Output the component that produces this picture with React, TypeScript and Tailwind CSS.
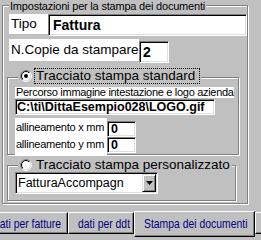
import React from 'react';

const sunken =
  'border border-t-[#808080] border-l-[#808080] border-b-white border-r-white shadow-[inset_1px_1px_0_#000,inset_-1px_-1px_0_#dfdfdf] bg-white';
const etched = 'border border-[#808080] shadow-[1px_1px_0_#fff,inset_1px_1px_0_#fff]';

const Radio: React.FC<{ checked?: boolean }> = ({ checked }) => (
  <svg width="12" height="12" viewBox="0 0 12 12" className="shrink-0">
    <defs>
      <linearGradient id="ro" x1="0" y1="0" x2="1" y2="1">
        <stop offset="0.5" stopColor="#808080" />
        <stop offset="0.5" stopColor="#ffffff" />
      </linearGradient>
      <linearGradient id="ri" x1="0" y1="0" x2="1" y2="1">
        <stop offset="0.5" stopColor="#000000" />
        <stop offset="0.5" stopColor="#dfdfdf" />
      </linearGradient>
    </defs>
    <circle cx="6" cy="6" r="5.5" fill="none" stroke="url(#ro)" />
    <circle cx="6" cy="6" r="4.5" fill="#fff" stroke="url(#ri)" />
    {checked && <circle cx="6" cy="6" r="2" fill="#000" />}
  </svg>
);

const Tab: React.FC<{ label: string; w: string; selected?: boolean }> = ({ label, w, selected }) => (
  <div
    className={`${w} ${selected ? 'h-[26px] -mt-[1px] pt-[5px]' : 'h-[22px] pt-[4px]'} relative shrink-0 border-t border-l border-t-white border-l-white border-r border-b border-r-black border-b-black shadow-[inset_-1px_-1px_0_#808080] pl-[9px] whitespace-nowrap`}
  >
    <span className="block w-[10px] origin-left scale-x-80 text-[13px] leading-[14px] text-[#000080]">{label}</span>
  </div>
);

export default function App() {
  return (
    <div className="w-[261px] h-[240px] overflow-hidden bg-[#c0c0c0] text-black font-['Liberation_Sans',Arial,sans-serif]">
      {/* outer group */}
      <div className={`relative ml-[2px] mt-[5px] w-[246px] h-[199px] ${etched}`}>
        <div className="absolute left-[6px] -top-[6px] bg-[#c0c0c0] px-[1px] text-[11px] leading-[12px] tracking-[-0.2px] whitespace-nowrap">
          Impostazioni per la stampa dei documenti
        </div>

        <div className="pl-[6px] pt-[8px]">
          <div className="flex items-start">
            <div className="w-[39px] h-[20px] bg-white pl-[2px] text-[13.5px] leading-[20px]">Tipo</div>
            <div className={`w-[199px] h-[22px] flex items-center pl-[4px] ${sunken}`}>
              <span className="font-bold text-[14px]">Fattura</span>
            </div>
          </div>
          <div className="flex items-start mt-[3px]">
            <div className="w-[130px] h-[22px] bg-white pl-[2px] text-[13.5px] leading-[22px] whitespace-nowrap">N.Copie da stampare</div>
            <div className={`w-[30px] h-[22px] mt-[2px] flex items-center pl-[3px] ${sunken}`}>
              <span className="font-bold text-[14px]">2</span>
            </div>
          </div>
        </div>

        {/* standard */}
        <div className={`relative ml-[4px] mt-[14px] w-[232px] h-[78px] ${etched}`}>
          <div className="absolute left-[10px] -top-[10px] h-[16px] flex items-center bg-[#c0c0c0] pl-[2px] pr-[1px]">
            <Radio checked />
            <div className="ml-[2px] h-[16px] w-[166px] border border-dotted border-black pl-[1px] text-[13.5px] leading-[14px] whitespace-nowrap">
              Tracciato stampa standard
            </div>
          </div>
          <div className="pl-[7px] pt-[9px]">
            <div className="w-[219px] h-[11px] bg-white pl-[1px] text-[11px] leading-[11px] tracking-[-0.3px] whitespace-nowrap">
              Percorso immagine intestazione e logo azienda
            </div>
            <div className={`w-[200px] h-[16px] mt-[1px] flex items-center pl-[1px] ${sunken}`}>
              <span className="font-bold text-[12.5px] leading-[14px] whitespace-nowrap">C:\ti\DittaEsempio028\LOGO.gif</span>
            </div>
            <div className="flex items-start mt-[3px]">
              <div className="w-[92px] h-[37px] bg-white pl-[1px] pt-[1px] text-[11px] leading-[17px] tracking-[-0.25px] whitespace-nowrap">
                <div>allineamento x mm</div>
                <div>allineamento y mm</div>
              </div>
              <div className="flex flex-col mt-[3px]">
                <div className={`w-[29px] h-[16px] flex items-center pl-[3px] ${sunken}`}>
                  <span className="font-bold text-[12.5px] leading-[14px]">0</span>
                </div>
                <div className={`w-[29px] h-[16px] flex items-center pl-[3px] ${sunken}`}>
                  <span className="font-bold text-[12.5px] leading-[14px]">0</span>
                </div>
              </div>
            </div>
          </div>
        </div>

        {/* personalizzato */}
        <div className={`relative ml-[4px] mt-[10px] w-[229px] h-[36px] ${etched}`}>
          <div className="absolute left-[10px] -top-[8px] h-[14px] flex items-center bg-[#c0c0c0] pl-[2px] pr-[1px]">
            <Radio />
            <div className="ml-[2px] border border-transparent pl-[1px] text-[13.5px] leading-[14px] whitespace-nowrap">
              Tracciato stampa personalizzato
            </div>
          </div>
          <div className="pl-[7px] pt-[6px]">
            <div className={`w-[143px] h-[22px] flex items-center justify-between pl-[2px] pr-[1px] ${sunken}`}>
              <span className="text-[12.5px] leading-[14px] whitespace-nowrap">FatturaAccompagn</span>
              <div className="w-[14px] h-[18px] flex items-center justify-center bg-[#c0c0c0] border border-t-[#dfdfdf] border-l-[#dfdfdf] border-b-black border-r-black shadow-[inset_1px_1px_0_#fff,inset_-1px_-1px_0_#808080]">
                <svg width="7" height="4" viewBox="0 0 7 4">
                  <polygon points="0,0 7,0 3.5,4" fill="#000" />
                </svg>
              </div>
            </div>
          </div>
        </div>
      </div>

      {/* tabs */}
      <div className="flex items-start mt-[8px] -ml-[16px]">
        <Tab label="dati per fatture" w="w-[84px]" />
        <Tab label="dati per ddt" w="w-[66px]" />
        <Tab label="Stampa dei documenti" w="w-[121px]" selected />
        <Tab label="" w="w-[20px]" />
      </div>
    </div>
  );
}
